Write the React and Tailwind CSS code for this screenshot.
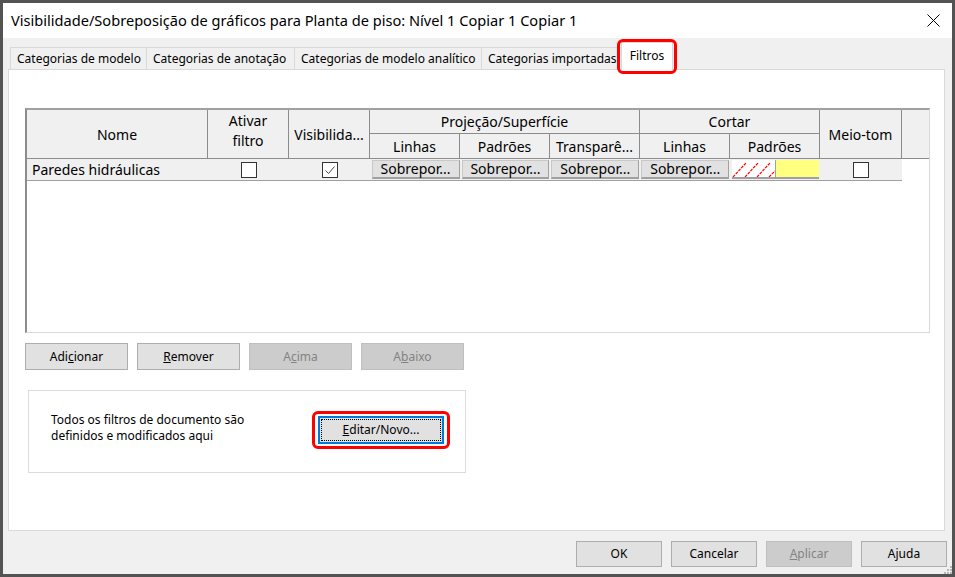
import React from 'react';

const tabs = [
  { label: 'Categorias de modelo', w: 'w-[136px]' },
  { label: 'Categorias de anotação', w: 'w-[148px]' },
  { label: 'Categorias de modelo analítico', w: 'w-[187px]' },
  { label: 'Categorias importadas', w: 'w-[142px]' },
];

const Checkbox = ({ checked }) => (
  <div className="w-[16px] h-[16px] border border-[#333333] bg-white flex items-center justify-center">
    {checked && (
      <svg width="12" height="12" viewBox="0 0 12 12">
        <path d="M1.5 6.5 L4.5 9.5 L10.5 2.5" fill="none" stroke="#444" strokeWidth="1" />
      </svg>
    )}
  </div>
);

const Button = ({ children, disabled, className = '' }) => (
  <div
    className={`flex items-center justify-center border text-[12px] ${
      disabled ? 'bg-[#cccccc] border-[#bfbfbf] text-[#838383]' : 'bg-[#e1e1e1] border-[#adadad] text-black'
    } ${className}`}
  >
    {children}
  </div>
);

const Sobrepor = () => (
  <div className="h-[19px] mx-[1px] bg-[#e1e1e1] border border-[#c8c8c8] border-b-2 border-b-[#a0a0a0] border-r-[#a0a0a0] flex items-center justify-center text-[14px] leading-none">
    Sobrepor...
  </div>
);

export default function App() {
  return (
    <div className="w-[955px] h-[577px] bg-[#535353] p-[3px] font-['Noto_Sans','Open_Sans',sans-serif] text-black">
      <div className="w-full h-full bg-[#f0f0f0] flex flex-col relative">
        {/* title bar */}
        <div className="h-[35px] bg-white flex items-center justify-between pl-[8px] pr-[12px] shrink-0">
          <span className="text-[14.6px]">Visibilidade/Sobreposição de gráficos para Planta de piso: Nível 1 Copiar 1 Copiar 1</span>
          <svg width="13" height="13" viewBox="0 0 13 13">
            <path d="M0.5 0.5 L12.5 12.5 M12.5 0.5 L0.5 12.5" stroke="#000" strokeWidth="1" />
          </svg>
        </div>

        {/* tabs */}
        <div className="px-[5px] pt-[4px] flex flex-col">
          <div className="flex items-end h-[27px] pl-[2px] relative z-10">
            {tabs.map((t) => (
              <div
                key={t.label}
                className={`${t.w} h-[22px] border-t border-l border-[#d9d9d9] bg-[#f0f0f0] text-[12px] pl-[6px] flex items-center whitespace-nowrap overflow-hidden`}
              >
                {t.label}
              </div>
            ))}
            <div className="relative -ml-[2px] w-[52px] h-[28px] -mb-[1px] bg-white border-t border-l border-r border-[#d9d9d9] text-[12px] flex items-center justify-center pb-[2px]">
              Filtros
              <div className="absolute -left-[5px] -right-[5px] -top-[4px] -bottom-[4px] border-[3px] border-[#ff0000] rounded-[6px]" />
            </div>
          </div>

          {/* panel */}
          <div className="w-[937px] h-[462px] bg-white border border-[#d9d9d9] flex flex-col pl-[16px] pt-[38px]">
            {/* table */}
            <div className="w-[905px] h-[225px] border-t-2 border-l-2 border-t-[#a0a0a0] border-l-[#8c8c8c] border-r border-b border-r-[#d9d9d9] border-b-[#d9d9d9] flex flex-col">
              <div className="grid grid-cols-[181px_81px_81px_90px_90px_90px_90px_90px_82px_1fr] grid-rows-[24px_25px] bg-[#f0f0f0] text-[14px] leading-[17px]">
                <div className="col-start-1 row-start-1 row-span-2 border-r border-b border-[#8c8c8c] flex items-center justify-center">Nome</div>
                <div className="col-start-2 row-start-1 row-span-2 border-r border-b border-[#8c8c8c] flex flex-col items-center justify-center text-center leading-[20px] pb-[6px]">
                  <span>Ativar</span>
                  <span>filtro</span>
                </div>
                <div className="col-start-3 row-start-1 row-span-2 border-r border-b border-[#8c8c8c] flex items-center justify-center">Visibilida...</div>
                <div className="col-start-4 col-span-3 row-start-1 border-r border-b border-[#8c8c8c] flex items-center justify-center">Projeção/Superfície</div>
                <div className="col-start-7 col-span-2 row-start-1 border-r border-b border-[#8c8c8c] flex items-center justify-center">Cortar</div>
                <div className="col-start-9 row-start-1 row-span-2 border-r border-b border-[#8c8c8c] flex items-center justify-center">Meio-tom</div>
                <div className="col-start-10 row-start-1 row-span-2 border-b border-[#8c8c8c]" />
                <div className="col-start-4 row-start-2 border-r border-b border-[#8c8c8c] flex items-center justify-center">Linhas</div>
                <div className="col-start-5 row-start-2 border-r border-b border-[#8c8c8c] flex items-center justify-center">Padrões</div>
                <div className="col-start-6 row-start-2 border-r border-b border-[#8c8c8c] flex items-center justify-center">Transparê...</div>
                <div className="col-start-7 row-start-2 border-r border-b border-[#8c8c8c] flex items-center justify-center">Linhas</div>
                <div className="col-start-8 row-start-2 border-r border-b border-[#8c8c8c] flex items-center justify-center">Padrões</div>
              </div>

              {/* data row */}
              <div className="flex w-[875px] h-[22px] bg-[#f0f0f0] border-b border-[#a0a0a0] items-center text-[14px]">
                <div className="w-[181px] pl-[5px] whitespace-nowrap">Paredes hidráulicas</div>
                <div className="w-[82px] flex justify-center"><Checkbox /></div>
                <div className="w-[81px] flex justify-center"><Checkbox checked /></div>
                <div className="w-[90px]"><Sobrepor /></div>
                <div className="w-[90px]"><Sobrepor /></div>
                <div className="w-[90px]"><Sobrepor /></div>
                <div className="w-[90px]"><Sobrepor /></div>
                <div className="w-[90px] flex pl-[2px] pr-[1px]">
                  <div className="w-[43px] h-[19px] bg-white border-b-2 border-[#a0a0a0]">
                    <svg width="43" height="17" viewBox="0 0 43 17">
                      <path d="M1 17 L14 3 M13 17 L26 3 M25 17 L38 3 M37 17 L43 11" stroke="#ff0000" strokeWidth="1.2" strokeDasharray="3 1" />
                    </svg>
                  </div>
                  <div className="flex-1 h-[19px] bg-[#ffff80] border-b-2 border-l border-[#a0a0a0]" />
                </div>
                <div className="w-[82px] flex justify-center"><Checkbox /></div>
              </div>
            </div>

            {/* buttons row */}
            <div className="flex gap-[9px] mt-[10px]">
              <Button className="w-[103px] h-[27px]">Adi<u>c</u>ionar</Button>
              <Button className="w-[103px] h-[27px]"><u>R</u>emover</Button>
              <Button disabled className="w-[103px] h-[27px]">A<u>c</u>ima</Button>
              <Button disabled className="w-[103px] h-[27px]">A<u>b</u>aixo</Button>
            </div>

            {/* group box */}
            <div className="ml-[3px] mt-[20px] w-[438px] h-[83px] border border-[#dcdcdc] flex items-center pl-[22px] pb-[3px]">
              <div className="w-[261px] text-[12px] leading-[16px] mb-[4px]">
                Todos os filtros de documento são<br />definidos e modificados aqui
              </div>
              <div className="border-[3px] border-[#ff0000] rounded-[6px] pl-[3px] pr-[3px] py-[2px]">
                <div className="w-[126px] h-[28px] border-2 border-[#0078d7] bg-[#e1e1e1] flex p-[1px]">
                  <div className="flex-1 border border-dotted border-black flex items-center justify-center text-[12px]">
                    <u>E</u>ditar/Novo...
                  </div>
                </div>
              </div>
            </div>
          </div>
        </div>

        {/* footer */}
        <div className="flex justify-end gap-[9px] pr-[5px] mt-[10px]">
          <Button className="w-[86px] h-[26px]">OK</Button>
          <Button className="w-[86px] h-[26px]">Cancelar</Button>
          <Button disabled className="w-[86px] h-[26px]"><u>A</u>plicar</Button>
          <Button className="w-[86px] h-[26px]">Ajuda</Button>
        </div>

        {/* resize grip */}
        <svg className="absolute right-0 bottom-0" width="8" height="8" viewBox="0 0 8 8">
          <rect x="6" y="0" width="2" height="2" fill="#b8b8b8" />
          <rect x="3" y="3" width="2" height="2" fill="#b8b8b8" />
          <rect x="6" y="3" width="2" height="2" fill="#b8b8b8" />
          <rect x="0" y="6" width="2" height="2" fill="#b8b8b8" />
          <rect x="3" y="6" width="2" height="2" fill="#b8b8b8" />
          <rect x="6" y="6" width="2" height="2" fill="#b8b8b8" />
        </svg>
      </div>
    </div>
  );
}
